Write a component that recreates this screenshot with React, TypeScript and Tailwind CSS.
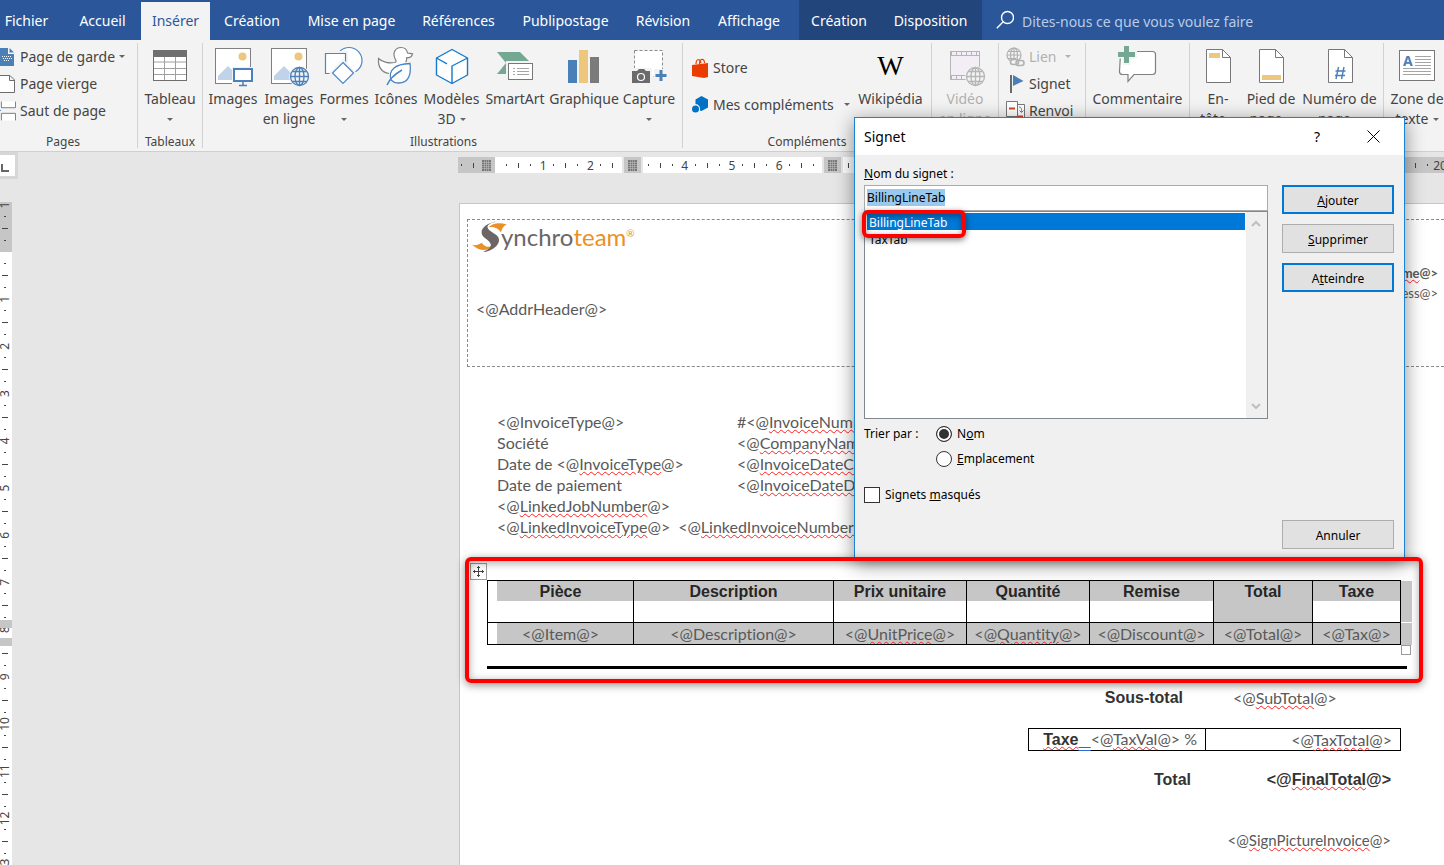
import type { ReactNode } from "react";

const UNIT = 47.2;

function Caret({ className = "text-[#666666]" }: { className?: string }) {
  return (
    <svg viewBox="0 0 6 3" className={`w-1.5 h-[3px] shrink-0 ${className}`} fill="currentColor">
      <path d="M0 0h6L3 3z" />
    </svg>
  );
}

function Icon({ children }: { children: ReactNode }) {
  return (
    <svg viewBox="0 0 44 44" className="w-11 h-11 shrink-0" fill="none">
      {children}
    </svg>
  );
}

function Globe({ color }: { color: string }) {
  return (
    <g stroke={color} strokeWidth="1.3">
      <circle cx="32.5" cy="32.5" r="9" fill="#f3f3f3" />
      <ellipse cx="32.5" cy="32.5" rx="4.5" ry="9" />
      <path d="M32.5 23.5v18M23.5 32.5h18M25 27.5h15M25 37.5h15" />
    </g>
  );
}

function PictureFrame() {
  return (
    <>
      <rect x="4.5" y="4.5" width="35" height="35" fill="#fff" stroke="#808080" />
      <circle cx="31.5" cy="12.5" r="4" fill="#eec77e" />
      <path d="M7 36v-4l10-10 6 6v8z" fill="#c0d3e8" />
    </>
  );
}

function SheetIcon({ children }: { children: ReactNode }) {
  return (
    <Icon>
      <path d="M10.5 5.5h16l8 8v25h-24z" fill="#fff" stroke="#777" />
      <path d="M26.5 5.5v8h8" stroke="#777" />
      {children}
    </Icon>
  );
}

type BigButtonProps = {
  icon: ReactNode;
  label: string;
  second?: string;
  caret?: boolean;
  disabled?: boolean;
  width: string;
};

function BigButton({ icon, label, second, caret, disabled, width }: BigButtonProps) {
  return (
    <button
      disabled={disabled}
      className={`flex flex-col items-center shrink-0 pt-px text-sm leading-5 whitespace-nowrap ${width} ${
        disabled ? "text-[#b1b1b1]" : "text-[#444444]"
      }`}
    >
      {icon}
      <span className="mt-px">{label}</span>
      <span className="flex items-center gap-1 h-5">
        {second}
        {caret && <Caret />}
      </span>
    </button>
  );
}

function SmallButton({
  icon,
  label,
  caret,
  disabled,
}: {
  icon: ReactNode;
  label: string;
  caret?: boolean;
  disabled?: boolean;
}) {
  return (
    <button
      disabled={disabled}
      className={`flex items-center h-[27px] text-sm whitespace-nowrap ${
        disabled ? "text-[#b1b1b1]" : "text-[#444444]"
      }`}
    >
      {icon}
      <span className="ml-1">{label}</span>
      {caret && (
        <span className={disabled ? "ml-2" : "ml-1"}>
          <Caret className={disabled ? "text-[#b1b1b1]" : "text-[#666666]"} />
        </span>
      )}
    </button>
  );
}

function Group({ label, width, children }: { label?: string; width: string; children: ReactNode }) {
  return (
    <div className={`flex flex-col shrink-0 h-[105px] border-r border-[#d2d2d2] ${width}`}>
      <div className="flex shrink-0 h-[88px]">{children}</div>
      <div className="shrink-0 text-xs leading-[22px] text-center text-[#444444]">{label}</div>
    </div>
  );
}

const tabs = [
  { name: "Fichier", width: "w-[53px]" },
  { name: "Accueil", width: "w-[77px] ml-[11px]" },
  { name: "Insérer", width: "w-[69px]", active: true },
  { name: "Création", width: "w-[84px]" },
  { name: "Mise en page", width: "w-[115px]" },
  { name: "Références", width: "w-[99px]" },
  { name: "Publipostage", width: "w-[115px]" },
  { name: "Révision", width: "w-[80px]" },
  { name: "Affichage", width: "w-[92px]" },
];

function TabBar() {
  return (
    <nav className="flex h-10 shrink-0 bg-[#2b579a] text-sm text-white whitespace-nowrap">
      {tabs.map((tab, i) => (
        <button
          key={i}
          className={`shrink-0 ${tab.width} ${
            tab.active ? "mt-0.5 pb-px bg-[#f3f3f3] text-[#2b579a]" : "pt-px"
          }`}
        >
          {tab.name}
        </button>
      ))}
      <div className="flex shrink-0 ml-1 bg-[#22457b]">
        <button className="w-20 pt-px">Création</button>
        <button className="w-[103px] pt-px">Disposition</button>
      </div>
      <label className="flex flex-1 items-center gap-2 pl-3.5">
        <svg viewBox="0 0 18 20" className="w-[18px] h-5 shrink-0" fill="none" stroke="#fff" strokeWidth="1.4">
          <circle cx="11.5" cy="7.5" r="6" />
          <path d="M7.2 11.8L.8 18.2" />
        </svg>
        <input
          aria-label="Recherche"
          placeholder="Dites-nous ce que vous voulez faire"
          className="flex-1 h-6 pt-0.5 bg-transparent outline-none placeholder:text-[#b9cbe6]"
        />
      </label>
    </nav>
  );
}

function Ribbon() {
  return (
    <div className="flex h-28 shrink-0 pt-[3px] overflow-hidden bg-[#f3f3f3] border-b border-[#cfcfcf]">
      <Group label="Pages" width="w-[138px] pr-[11px]">
        <div className="flex flex-col">
          <SmallButton
            label="Page de garde"
            caret
            icon={
              <svg viewBox="0 0 16 20" className="w-4 h-5">
                <path d="M0 1h8v6h6v12H0z" fill="#4a7fb8" />
                <path d="M9.5 1L14 5.5H9.5z" fill="#4a7fb8" />
                <path d="M2 9.5h9M3 11.5h9M4 13.5h6" stroke="#fff" strokeDasharray="1 1" />
              </svg>
            }
          />
          <SmallButton
            label="Page vierge"
            icon={
              <svg viewBox="0 0 16 20" className="w-4 h-5" fill="#fff" stroke="#6d6d6d">
                <path d="M0 1.5h10l4.5 4.5v12.5H0M9.5 1.5v5h5" />
              </svg>
            }
          />
          <SmallButton
            label="Saut de page"
            icon={
              <svg viewBox="0 0 17 20" className="w-4 h-5" fill="#fff" stroke="#777">
                <path d="M1.5 0v6.500h15V0M1.500 20v-7.500h15V20" />
                <path d="M0 9.500h1" stroke="#4a7fb8" />
              </svg>
            }
          />
        </div>
      </Group>

      <Group label="Tableaux" width="w-[65px]">
        <BigButton
          label="Tableau"
          caret
          width="w-full"
          icon={
            <Icon>
              <rect x="5.5" y="6.5" width="33" height="30" fill="#fff" stroke="#6f6f6f" />
              <path d="M5 6h34v7H5z" fill="#6f6f6f" />
              <path d="M6 18h32M6 24.5h32M6 30.5h32M16.5 13v23M27.5 13v23" stroke="#a0a0a0" />
            </Icon>
          }
        />
      </Group>

      <Group label="Illustrations" width="w-[480px] pl-0.5">
        <BigButton
          label="Images"
          width="w-14"
          icon={
            <Icon>
              <PictureFrame />
              <path d="M21 23h22v20H21z" fill="#f3f3f3" />
              <rect x="23" y="25" width="18" height="12" fill="#fff" stroke="#4a80bb" strokeWidth="2" />
              <path d="M32 38v3M28 41.5h8" stroke="#4a80bb" strokeWidth="1.5" />
            </Icon>
          }
        />
        <BigButton
          label="Images"
          second="en ligne"
          width="w-14"
          icon={
            <Icon>
              <PictureFrame />
              <circle cx="32.5" cy="32.5" r="10.5" fill="#f3f3f3" />
              <Globe color="#4a80bb" />
            </Icon>
          }
        />
        <BigButton
          label="Formes"
          caret
          width="w-[54px]"
          icon={
            <Icon>
              <g fill="#fff" stroke="#4a86c5" strokeWidth="1.2">
                <circle cx="27" cy="16.5" r="13" />
                <path d="M2 8h23v23H2z" stroke="#f3f3f3" strokeWidth="2" />
                <path d="M3.5 9.5h20v20h-20z" />
                <path d="M21 16.5L33.5 29 21 41.5 8.5 29z" stroke="#f3f3f3" strokeWidth="2" />
                <path d="M21 18.5L31.5 29 21 39.5 10.5 29z" />
              </g>
            </Icon>
          }
        />
        <BigButton
          label="Icônes"
          width="w-[50px]"
          icon={
            <Icon>
              <path
                d="M15 29.5C6 28 4 22 4.500 14.500c4 4 11 5 16 4 2.500-.6 1.500-2 .5-4C18 8 22 3.500 27 3.500c3.500 0 6 2.200 6.500 5.500l5 .8c-.5 3-3 4-6 4 .8 2-.5 3-.5 4.500"
                fill="#fff"
                stroke="#808080"
                strokeWidth="1.2"
              />
              <path
                d="M17 36c-3-10 4-16 19-16.500 1.500 12-2 20-12 19.500-3 0-5-1-7-3z"
                fill="#fff"
                stroke="#4a86c5"
                strokeWidth="1.3"
              />
              <path d="M13 41c3-7 8-11 15-15" stroke="#4a86c5" strokeWidth="1.5" />
            </Icon>
          }
        />
        <BigButton
          label="Modèles"
          second="3D"
          caret
          width="w-[61px]"
          icon={
            <Icon>
              <g stroke="#1579cb" strokeWidth="1.4" strokeLinejoin="round">
                <path d="M22 5.500l15.500 8.500v17L22 39.500 6.500 31V14z" fill="#fff" />
                <path d="M37.500 14L22 22v17.500M6.500 14l10.500 5.800" />
              </g>
            </Icon>
          }
        />
        <BigButton
          label="SmartArt"
          width="w-[66px]"
          icon={
            <Icon>
              <path d="M4 8h23l11 11-11 11H4l9-11z" fill="#74a892" />
              <path d="M13 17h29v21H13z" fill="#f3f3f3" />
              <rect x="15.5" y="19.5" width="24" height="16" fill="#fff" stroke="#777" />
              <path d="M20 24.5h2M24 24.5h12M20 27.5h2M24 27.5h12M20 30.5h2M24 30.5h12" stroke="#a5a5a5" />
            </Icon>
          }
        />
        <BigButton
          label="Graphique"
          width="w-[72px]"
          icon={
            <Icon>
              <path d="M6 16h9v23H6z" fill="#4a7fb8" />
              <path d="M17 6h9v33h-9z" fill="#eec77e" />
              <path d="M28 13h9v26h-9z" fill="#7b7b7b" />
            </Icon>
          }
        />
        <BigButton
          label="Capture"
          caret
          width="w-[58px]"
          icon={
            <Icon>
              <rect x="7.5" y="6.5" width="28" height="26" fill="#fff" stroke="#8a8a8a" strokeDasharray="3 2" />
              <path d="M3 24h22v17H3zM27 25h14v14H27z" fill="#f3f3f3" />
              <path d="M5 27h5l2-2h5l2 2h4v12H5z" fill="#6b6b6b" />
              <circle cx="14" cy="33" r="3.5" stroke="#fff" strokeWidth="1.2" />
              <path d="M34 26v11M28.5 31.5h11" stroke="#4a7fb8" strokeWidth="3" />
            </Icon>
          }
        />
      </Group>

      <Group label="Compléments" width="w-[249px]">
        <div className="flex flex-col w-[172px] pl-[9px] pt-[11px] gap-2.5">
          <SmallButton
            label="Store"
            icon={
              <svg viewBox="0 0 17 20" className="w-[17px] h-5" fill="none">
                <path d="M4 6c0-5 4-6 5-1M7.5 6c0-6 5-6 5-1" stroke="#eb3c00" strokeWidth="1.2" />
                <path d="M0 7l16-2v14l-4 1-12-2z" fill="#eb3c00" />
              </svg>
            }
          />
          <div className="flex items-center gap-2.5">
            <SmallButton
              label="Mes compléments"
              icon={
                <svg viewBox="0 0 17 20" className="w-[17px] h-5" fill="#0072c6">
                  <path d="M9.5 1L16 4.5v8L9.5 16 8 15.5A5 5 0 0 0 3.5 9V4.5z" />
                  <circle cx="3.5" cy="14" r="3.5" />
                </svg>
              }
            />
            <Caret />
          </div>
        </div>
        <BigButton
          label="Wikipédia"
          width="w-[71px]"
          icon={
            <span className="h-11 font-['Liberation_Serif',serif] text-[28px] leading-[44px] text-black">W</span>
          }
        />
      </Group>

      <Group width="w-[67px]">
        <BigButton
          label="Vidéo"
          second="en ligne"
          disabled
          width="w-full"
          icon={
            <Icon>
              <rect x="7.5" y="7.5" width="29" height="28" fill="#f3eef6" stroke="#b5b5b5" />
              <path d="M8 9.5h28M8 33.5h28" stroke="#b5b5b5" strokeWidth="3" strokeDasharray="1 4" />
              <path d="M8 11.5h28M8 31.5h28" stroke="#b5b5b5" />
              <circle cx="32.5" cy="32.5" r="10.5" fill="#f3f3f3" />
              <Globe color="#b5b5b5" />
            </Icon>
          }
        />
      </Group>

      <Group width="w-[87px]">
        <div className="flex flex-col pl-[7px]">
          <SmallButton
            label="Lien"
            caret
            disabled
            icon={
              <svg viewBox="0 0 19 20" className="w-[19px] h-5" fill="none" stroke="#b1b1b1" strokeWidth="1.2">
                <circle cx="8" cy="8" r="7" />
                <ellipse cx="8" cy="8" rx="3.5" ry="7" />
                <path d="M1 8h14M2 4.5h12M8 1v14M2 11.5h8" />
                <rect x="4.5" y="12.5" width="8" height="5" rx="2.5" fill="#f3f3f3" strokeWidth="1.6" />
                <rect x="10" y="13.5" width="8" height="5" rx="2.5" strokeWidth="1.6" />
              </svg>
            }
          />
          <SmallButton
            label="Signet"
            icon={
              <svg viewBox="0 0 19 20" className="w-[19px] h-5">
                <path d="M4 1h2v18H4z" fill="#6b6b6b" />
                <path d="M7 1l10.500 6L7 12z" fill="#4a7fb8" />
              </svg>
            }
          />
          <SmallButton
            label="Renvoi"
            icon={
              <svg viewBox="0 0 19 20" className="w-[19px] h-5" fill="#fff" stroke="#777">
                <path d="M.5 .5h11v15H.5zM11.500 3.500h7v14h-7z" />
                <path d="M3 7.500h6M12 15.500h5" stroke="#d24726" strokeWidth="2" />
                <path d="M13 6c3 0 2.500 3 2.500 5M13.500 9.500l2 2 2-2" fill="none" />
              </svg>
            }
          />
        </div>
      </Group>

      <Group width="w-[104px]">
        <BigButton
          label="Commentaire"
          width="w-full"
          icon={
            <Icon>
              <path
                d="M4.5 10c0-2 1-2.500 3-2.500h29c2 0 3 1 3 3v17c0 2-1 3-3 3H18l-6 7v-7H6.500c-2 0-3-1-3-3z"
                fill="#fff"
                stroke="#808080"
                strokeWidth="1.2"
              />
              <path d="M10.5 0v21M0 10.5h21" stroke="#f3f3f3" strokeWidth="8" />
              <path d="M10.5 2v17M2 10.5h17" stroke="#74a892" strokeWidth="5" />
            </Icon>
          }
        />
      </Group>

      <Group width="w-[194px]">
        <BigButton
          label="En-"
          second="tête"
          caret
          width="w-14"
          icon={
            <SheetIcon>
              <path d="M13 9h11v5H13z" fill="#eec77e" />
            </SheetIcon>
          }
        />
        <BigButton
          label="Pied de"
          second="page"
          caret
          width="w-[50px]"
          icon={
            <SheetIcon>
              <path d="M13 31h19v5H13z" fill="#eec77e" />
            </SheetIcon>
          }
        />
        <BigButton
          label="Numéro de"
          second="page"
          caret
          width="w-[87px]"
          icon={
            <SheetIcon>
              <path d="M20.5 23l-2.500 12M26 23l-2.500 12M17.500 27h10M17 31.500h10" stroke="#4a7fb8" strokeWidth="1.4" />
            </SheetIcon>
          }
        />
      </Group>

      <Group width="w-[67px]">
        <BigButton
          label="Zone de"
          second="texte"
          caret
          width="w-[66px]"
          icon={
            <Icon>
              <rect x="4.5" y="6.5" width="35" height="30" fill="#fff" stroke="#777" />
              <path d="M20 12.5h16M20 15.5h16M20 18.5h16M20 21.5h16M8 24.5h28M8 27.5h28M8 30.5h28" stroke="#a5a5a5" />
              <text x="8" y="22" fontSize="14" fontWeight="bold" fill="#4a7fb8">
                A
              </text>
            </Icon>
          }
        />
      </Group>
    </div>
  );
}

function HorizontalRuler() {
  const zero = 38;
  const columns = [166, 366];
  return (
    <svg className="flex-1 h-4 mt-[5px]" fontSize="12" fill="#444">
      <rect width="100%" height="16" fill="#fff" />
      <rect width="37" height="16" fill="#c6c6c6" />
      <rect x="900" width="200" height="16" fill="#c6c6c6" />
      <rect x="3" y="7" width="1" height="2" />
      <rect x="15" y="6" width="1" height="5" />
      {Array.from({ length: 20 }, (_, i) => {
        const x = zero + i * UNIT;
        return (
          <g key={i}>
            <rect x={Math.round(x + 10)} y="7" width="1" height="2" />
            <rect x={Math.round(x + 22)} y="6" width="1" height="5" />
            <rect x={Math.round(x + 34)} y="7" width="1" height="2" />
            <text x={x + UNIT} y="13" textAnchor="middle">
              {i + 1}
            </text>
          </g>
        );
      })}
      {columns.map((x) => (
        <g key={x}>
          <rect x={x - 2} width="21" height="16" fill="#e6e6e6" />
          <rect x={x} width="17" height="16" fill="#c6c6c6" />
        </g>
      ))}
      {[24, ...columns.map((x) => x + 4)].map((x) => (
        <g key={x}>
          <rect x={x} y="3" width="9" height="11" fill="#777" />
          <path
            d={`M${x + 2.5} 3v11M${x + 4.5} 3v11M${x + 6.5} 3v11M${x} 5.5h9M${x} 7.5h9M${x} 9.5h9M${x} 11.5h9`}
            stroke="#c6c6c6"
            strokeWidth=".5"
          />
        </g>
      ))}
    </svg>
  );
}

function VerticalRuler() {
  const zero = 50;
  return (
    <svg className="w-3 h-full shrink-0" fontSize="12" fill="#444">
      <rect width="12" height="100%" fill="#fff" />
      <rect width="12" height="50" fill="#c6c6c6" />
      {Array.from({ length: 16 }, (_, i) => {
        const y = zero + (i - 1) * UNIT;
        return (
          <g key={i}>
            <rect x="4" y={Math.round(y + 11)} width="2" height="1" />
            <rect x="2" y={Math.round(y + 23)} width="6" height="1" />
            <rect x="4" y={Math.round(y + 35)} width="2" height="1" />
            {i > 0 && (
              <text transform={`translate(9 ${y + UNIT}) rotate(-90)`} textAnchor="middle">
                {i}
              </text>
            )}
          </g>
        );
      })}
      <text transform="translate(9 3) rotate(-90)" textAnchor="middle">
        1
      </text>
      <rect y="418" width="12" height="8" fill="#c6c6c6" />
      <rect y="436" width="12" height="8" fill="#c6c6c6" />
    </svg>
  );
}

// Text flagged by the spell checker
function Typo({ children }: { children: ReactNode }) {
  return (
    <span className="underline decoration-wavy decoration-1 decoration-[#ff2020] underline-offset-1">{children}</span>
  );
}

const invoiceLines: { label: ReactNode; value?: ReactNode }[] = [
  { label: "<@InvoiceType@>", value: <>#&lt;@<Typo>InvoiceNumber</Typo>@&gt;</> },
  { label: "Société", value: <>&lt;@<Typo>CompanyName</Typo>@&gt;</> },
  {
    label: <>Date de &lt;@<Typo>InvoiceType</Typo>@&gt;</>,
    value: <>&lt;@<Typo>InvoiceDateCreated</Typo>@&gt;</>,
  },
  { label: "Date de paiement", value: <>&lt;@<Typo>InvoiceDateDue</Typo>@&gt;</> },
  { label: <>&lt;@<Typo>LinkedJobNumber</Typo>@&gt;</> },
];

const columns = [
  { title: "Pièce", field: "Item", width: "w-[146px]" },
  { title: "Description", field: "Description", width: "w-[200px]" },
  { title: "Prix unitaire", field: "UnitPrice", width: "w-[133px]", typo: true },
  { title: "Quantité", field: "Quantity", width: "w-[123px]", typo: true },
  { title: "Remise", field: "Discount", width: "w-[124px]" },
  { title: "Total", field: "Total", width: "w-[99px]", full: true },
  { title: "Taxe", field: "Tax", width: "w-[88px]" },
];

function Logo() {
  return (
    <div className="flex items-start h-9 font-[Lato,sans-serif] text-2xl leading-8">
      <svg viewBox="0 0 30 34" className="w-[29px] h-[34px] overflow-visible">
        <path d="M17 6C22 1 29 1 36 3c-3 1-5 4-6 8-4-5-8-6-13-5z" fill="#ea9026" />
        <path d="M0 24c4 1 7 0 10-2 3 4 6 5 11 3-5 6-13 6-21-1z" fill="#ea9026" />
        <path
          d="M26 0C17 1 9 6 10 12c.5 5 9 7 9.500 12 0 3-3 5-8 7.500C20 31 28 25 28 19c0-6-11-8-12-13 0-3 4-5 10-6z"
          fill="#6c6566"
        />
      </svg>
      <span className="text-[#6c6566]">ynchro</span>
      <span className="text-[#ea9026]">team</span>
      <span className="text-[10px] leading-6 text-[#ea9026]">®</span>
    </div>
  );
}

function ItemsTable() {
  return (
    <div className="relative mt-[43px] ml-[27px]">
      <div className="flex">
        <table className="w-[914px] table-fixed border-collapse text-center">
          <thead>
            <tr className="h-[42px]">
              {columns.map((c, i) => (
                <th
                  key={c.title}
                  className={`p-0 align-top border border-black font-['Liberation_Sans',sans-serif] text-base text-[#262626] ${c.width} ${
                    i === 0 ? "pl-[9px]" : ""
                  } ${c.full ? "bg-[#c6c6c6]" : ""}`}
                >
                  <div className={`h-5 leading-[22px] bg-[#c6c6c6] ${i === 0 ? "pr-[9px]" : ""}`}>{c.title}</div>
                </th>
              ))}
            </tr>
          </thead>
          <tbody>
            <tr className="h-[22px]">
              {columns.map((c, i) => (
                <td key={c.title} className={`p-0 border border-black ${i === 0 ? "pl-[9px]" : ""}`}>
                  <div
                    className={`h-[21px] leading-[22px] overflow-hidden bg-[#c6c6c6] ${i === 0 ? "pr-[9px]" : ""}`}
                  >
                    &lt;@{c.typo ? <Typo>{c.field}</Typo> : c.field}@&gt;
                  </div>
                </td>
              ))}
            </tr>
          </tbody>
        </table>
        <div className="flex flex-col gap-px w-[11px] pt-px">
          <div className="h-[41px] bg-[#c6c6c6]" />
          <div className="h-[22px] bg-[#c6c6c6]" />
        </div>
      </div>
      <div className="w-[920px] h-[3px] mt-[21px] bg-black" />

      <div className="absolute -top-[17px] -left-[17px] flex items-center justify-center size-[17px] bg-white border border-[#9a9a9a]">
        <svg viewBox="0 0 11 11" className="size-[11px]" fill="none" stroke="#444">
          <path d="M5.5 0v11M0 5.5h11M4 2l1.5-1.5L7 2M4 9l1.5 1.5L7 9M2 4L.5 5.5 2 7M9 4l1.5 1.5L9 7" />
        </svg>
      </div>
      <div className="absolute top-[65px] left-[914px] size-2.5 bg-white border border-[#9a9a9a]" />
      <div className="absolute -top-[23px] -left-[22px] w-[958px] h-[126px] rounded-md border-4 border-[#fe0000] shadow-[0_2px_8px_rgba(0,0,0,0.45),inset_0_2px_8px_rgba(0,0,0,0.35)] z-20" />
    </div>
  );
}

function Totals() {
  return (
    <div className="flex flex-col items-end w-[941px]">
      <div className="flex items-center h-6 mt-[17px] pr-[61px] gap-[50px]">
        <b className="font-['Liberation_Sans',sans-serif] text-[#333]">Sous-total</b>
        <span className="w-[107px]">
          &lt;@<Typo>SubTotal</Typo>@&gt;
        </span>
      </div>
      <table className="w-[373px] mt-[18px] table-fixed border-collapse text-right">
        <tbody>
          <tr className="h-[22px]">
            <td className="w-[177px] h-[22px] p-0 pr-2 leading-5 border border-black">
              <b className="font-['Liberation_Sans',sans-serif] text-[#333]">
                <Typo>Taxe</Typo>
              </b>
              <span className="underline decoration-double decoration-[#2b6cd9] underline-offset-2">&nbsp;&nbsp; </span>
              &lt;@<Typo>TaxVal</Typo>@&gt; %
            </td>
            <td className="p-0 pr-2 leading-5 border border-black">
              &lt;@<Typo>TaxTotal</Typo>@&gt;
            </td>
          </tr>
        </tbody>
      </table>
      <div className="flex items-center h-6 mt-[17px] pr-2.5 gap-[70px] font-['Liberation_Sans',sans-serif] text-[#333]">
        <b>Total</b>
        <b className="w-[130px] text-right">
          &lt;@<Typo>FinalTotal</Typo>@&gt;
        </b>
      </div>
      <div className="flex items-center h-6 mt-9 pr-2.5 text-[15px]">
        <span>
          &lt;@<Typo>SignPictureInvoice</Typo>@&gt;
        </span>
      </div>
    </div>
  );
}

function Page() {
  return (
    <main className="flex-1 ml-[447px] mt-px pt-[15px] bg-white border-l border-t border-[#c6c6c6] font-[Lato,sans-serif] [font-variant-ligatures:none] text-base text-[#595959] whitespace-nowrap">
      <header className="flex justify-between h-[148px] ml-[7px] pl-1 pr-1.5 pt-px border-y border-l border-dashed border-[#8a8a8a]">
        <div>
          <Logo />
          <p className="mt-[42px] ml-1 leading-5">&lt;@AddrHeader@&gt;</p>
        </div>
        <div className="mt-[42px] text-right text-[13px] leading-5">
          <p className="font-bold">
            &lt;@<Typo>CompanyName</Typo>@&gt;
          </p>
          <p>&lt;@CompanyAddress@&gt;</p>
        </div>
      </header>

      <section className="mt-11 ml-[37px] leading-[21px]">
        {invoiceLines.map((line, i) => (
          <div key={i} className="flex">
            <span className="w-60">{line.label}</span>
            <span>{line.value}</span>
          </div>
        ))}
        <div className="flex gap-2">
          <span>
            &lt;@<Typo>LinkedInvoiceType</Typo>@&gt;
          </span>
          <span>
            &lt;@<Typo>LinkedInvoiceNumber</Typo>@&gt;
          </span>
        </div>
      </section>

      <ItemsTable />
      <Totals />
    </main>
  );
}

function DialogButton({ primary, children }: { primary?: boolean; children: ReactNode }) {
  return (
    <button
      className={`w-28 h-[29px] pt-0.5 bg-[#e1e1e1] ${
        primary ? "border-2 border-[#0078d7]" : "border border-[#adadad]"
      }`}
    >
      {children}
    </button>
  );
}

function BookmarkDialog() {
  return (
    <div
      role="dialog"
      aria-label="Signet"
      className="absolute top-[117px] left-[854px] w-[551px] h-[443px] flex flex-col bg-[#f0f0f0] border border-[#1883d7] shadow-[0_4px_18px_rgba(0,0,0,0.45)] text-xs text-black z-10"
    >
      <div className="flex items-center h-[37px] pl-[9px] pr-6 bg-white text-sm">
        <h2 className="flex-1">Signet</h2>
        <button aria-label="Aide" className="w-4 mr-[42px]">
          ?
        </button>
        <button aria-label="Fermer">
          <svg viewBox="0 0 13 13" className="size-[13px]" stroke="#000">
            <path d="M.5.5l12 12M12.5.5l-12 12" />
          </svg>
        </button>
      </div>

      <div className="flex flex-1 pl-[9px] pr-2.5">
        <div className="w-[404px]">
          <label htmlFor="bookmark" className="block mt-2 leading-[22px]">
            <u>N</u>om du signet :
          </label>
          <div className="flex items-start h-[26px] pl-0.5 pt-[3px] bg-white border border-[#ababab]">
            <input
              id="bookmark"
              defaultValue="BillingLineTab"
              className="field-sizing-content h-[17px] bg-[#99c9ef] outline-none"
            />
          </div>
          <div className="relative flex h-[208px] bg-white border border-[#828790]">
            <ul role="listbox" aria-label="Signets" className="flex-1 pl-0.5 pt-px leading-[17px]">
              <li role="option" aria-selected="true" className="h-[17px] pl-0.5 leading-[19px] bg-[#0078d7] text-white">
                BillingLineTab
              </li>
              <li role="option" aria-selected="false" className="h-[17px] pl-0.5 leading-[19px]">
                TaxTab
              </li>
            </ul>
            <div className="flex flex-col items-center justify-between w-[21px] pr-0.5 ml-px py-2 bg-[#f0f0f0]">
              <svg viewBox="0 0 10 7" className="w-2.5 h-[7px]" fill="none" stroke="#bfbfbf" strokeWidth="2">
                <path d="M1 6l4-4 4 4" />
              </svg>
              <svg viewBox="0 0 10 7" className="w-2.5 h-[7px]" fill="none" stroke="#bfbfbf" strokeWidth="2">
                <path d="M1 1l4 4 4-4" />
              </svg>
            </div>
            <div className="absolute -top-0.5 -left-[3px] w-[104px] h-7 rounded-md border-4 border-[#fe0000] shadow-[0_2px_6px_rgba(0,0,0,0.5),inset_0_2px_6px_rgba(0,0,0,0.4)]" />
          </div>

          <fieldset className="flex mt-0.5 leading-[25px]">
            <legend className="float-left w-[72px]">Trier par :</legend>
            <div className="flex flex-col">
              <label className="flex items-center gap-[5px] h-[25px]">
                <input
                  type="radio"
                  name="sort"
                  defaultChecked
                  className="appearance-none size-4 rounded-full border border-[#333] bg-white checked:bg-[#333] checked:shadow-[inset_0_0_0_2px_#fff]"
                />
                <span>
                  N<u>o</u>m
                </span>
              </label>
              <label className="flex items-center gap-[5px] h-[25px]">
                <input
                  type="radio"
                  name="sort"
                  className="appearance-none size-4 rounded-full border border-[#333] bg-white"
                />
                <span>
                  <u>E</u>mplacement
                </span>
              </label>
            </div>
          </fieldset>
          <label className="flex items-center gap-[5px] h-6 mt-3">
            <input type="checkbox" className="appearance-none size-4 border border-[#333] bg-white" />
            <span>
              Signets <u>m</u>asqués
            </span>
          </label>
        </div>

        <div className="flex flex-col gap-2.5 ml-auto pt-[30px] pb-[10px]">
          <DialogButton primary>
            <u>A</u>jouter
          </DialogButton>
          <DialogButton>
            <u>S</u>upprimer
          </DialogButton>
          <DialogButton primary>
            A<u>t</u>teindre
          </DialogButton>
          <div className="mt-auto">
            <DialogButton>Annuler</DialogButton>
          </div>
        </div>
      </div>
    </div>
  );
}

export default function App() {
  return (
    <div className="relative flex flex-col h-screen overflow-hidden bg-[#e6e6e6] font-['Noto_Sans',sans-serif]">
      <TabBar />
      <Ribbon />
      <div className="flex shrink-0 h-[50px]">
        <div className="w-[18px] h-[27px] border-r-[3px] border-y-[3px] border-[#d6d6d6] bg-white">
          <svg viewBox="0 0 15 21" className="w-[15px] h-[21px]" fill="none" stroke="#666" strokeWidth="2">
            <path d="M2 9v7h7" />
          </svg>
        </div>
        <div className="flex flex-1 ml-[440px]">
          <HorizontalRuler />
        </div>
      </div>
      <div className="flex flex-1 min-h-0">
        <VerticalRuler />
        <Page />
      </div>
      <BookmarkDialog />
    </div>
  );
}
